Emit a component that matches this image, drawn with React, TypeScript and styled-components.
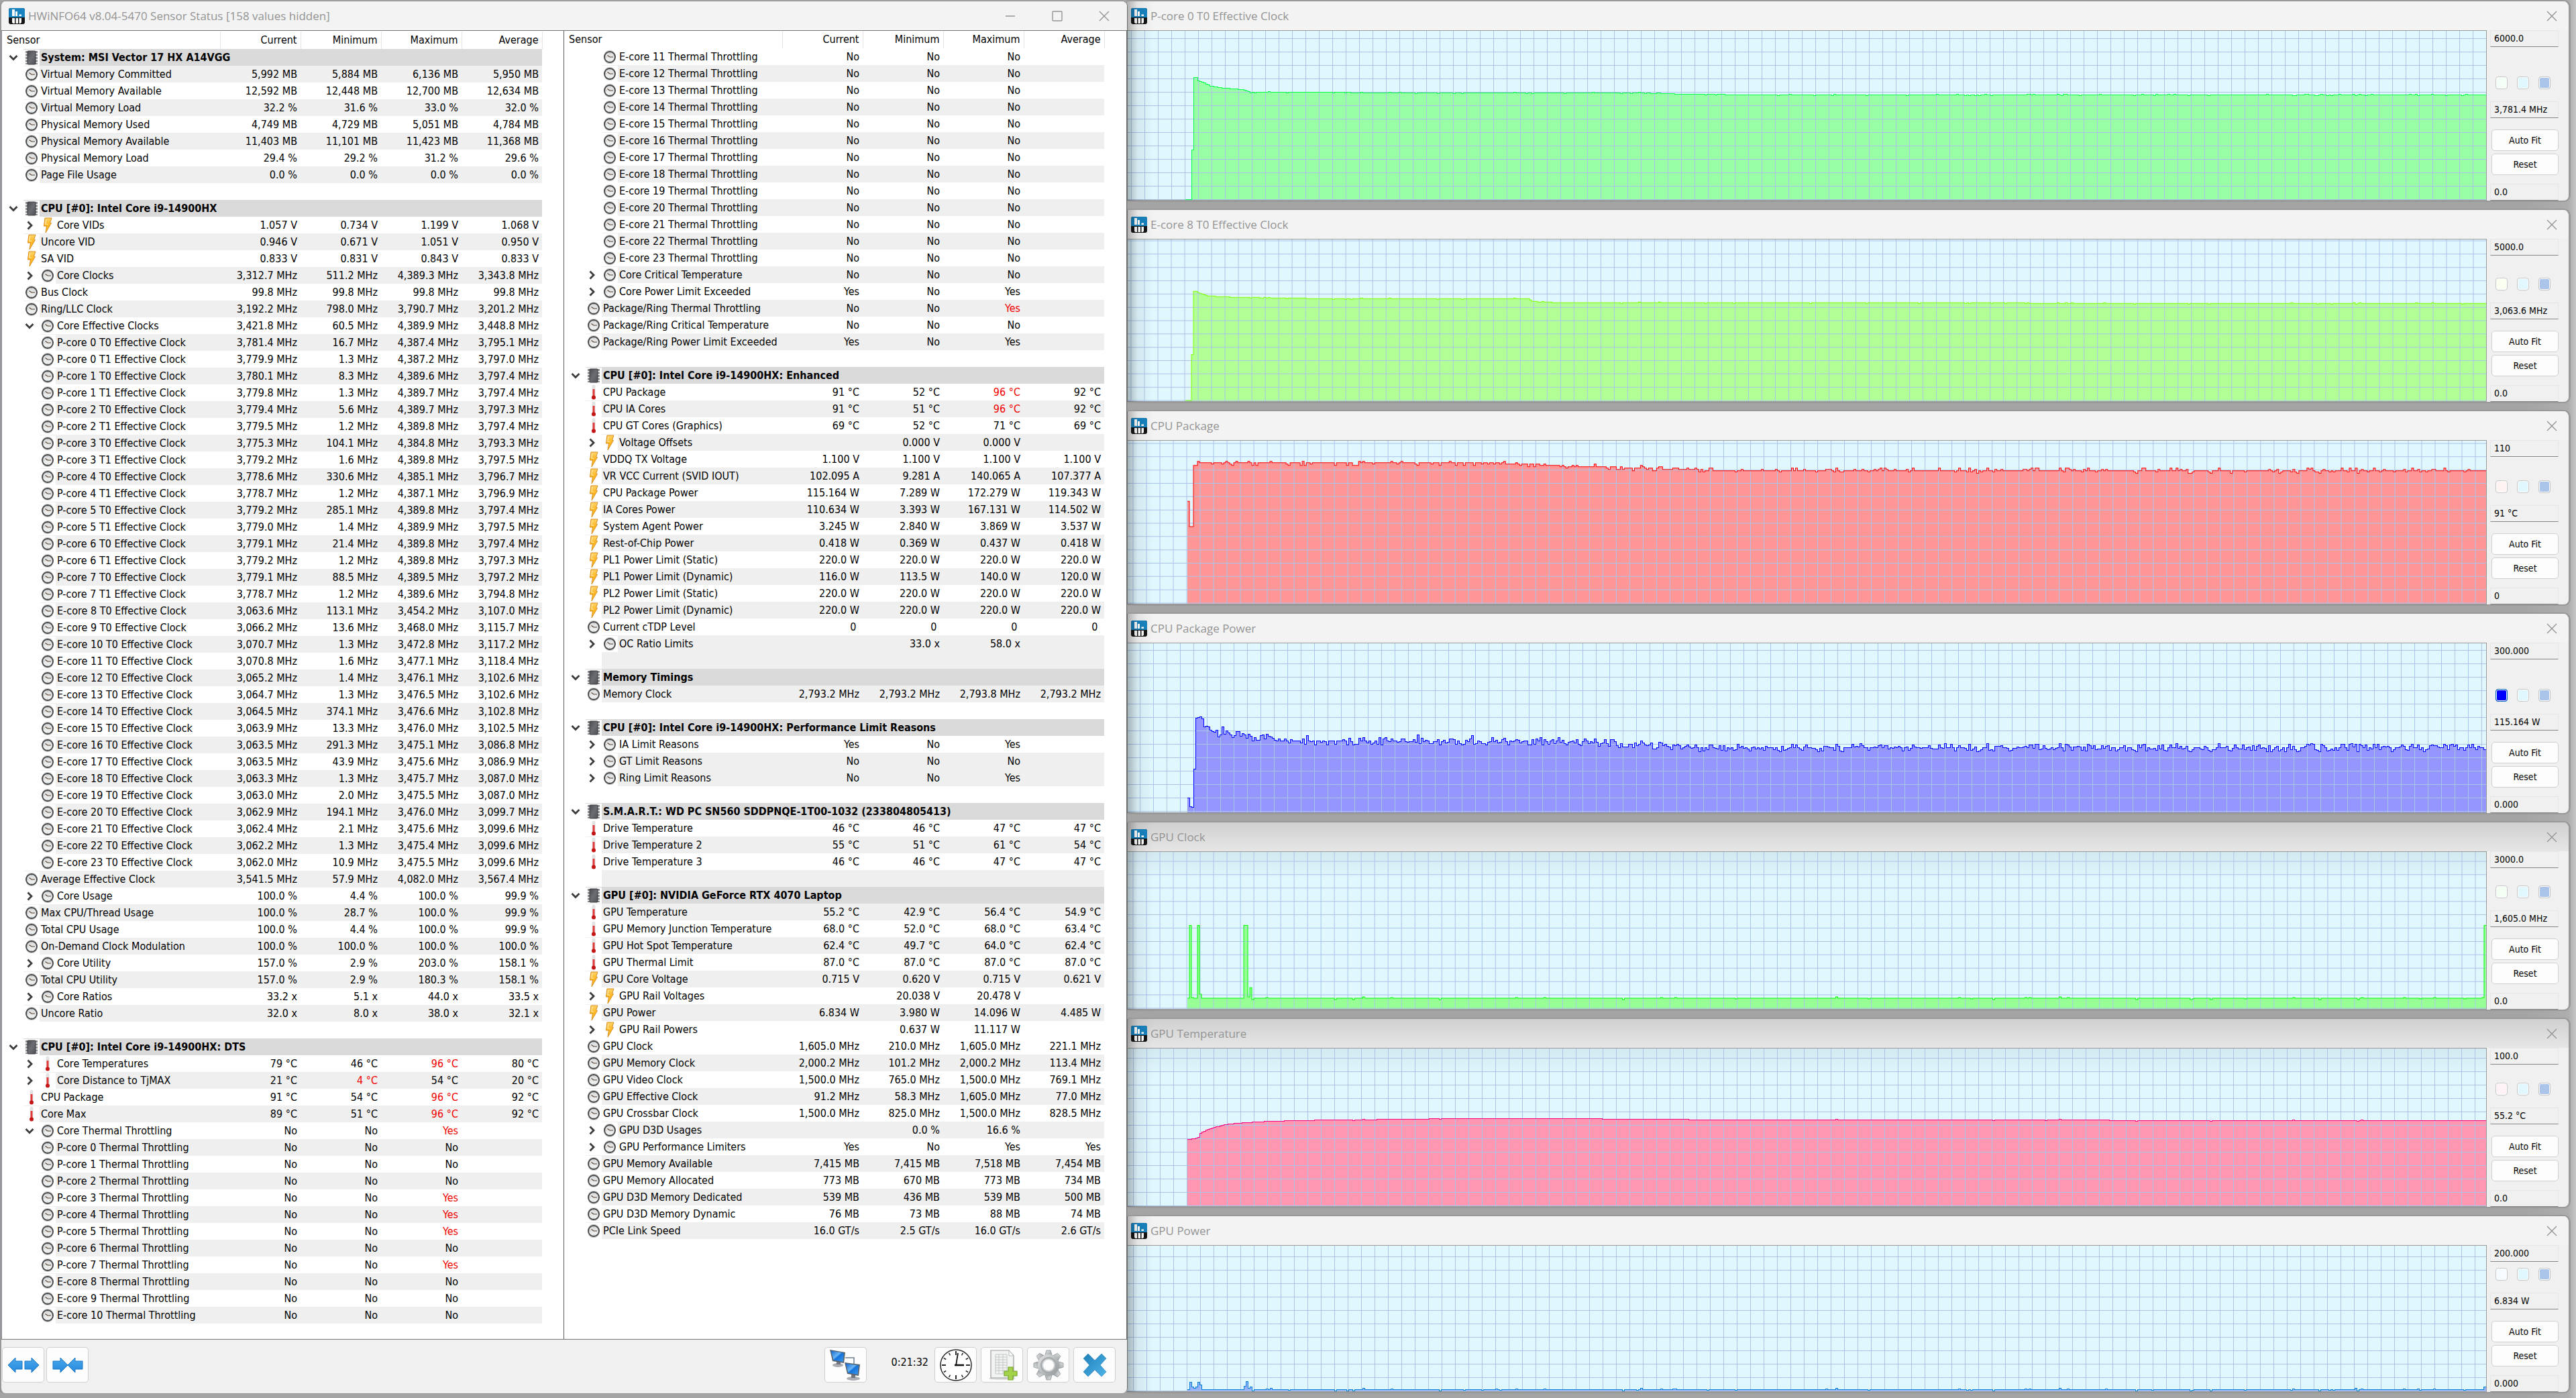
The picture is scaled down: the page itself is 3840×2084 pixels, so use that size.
import React from "react";
import styled, { createGlobalStyle, css } from "styled-components";

const UI_FONT = `"DejaVu Sans Condensed", "DejaVu Sans", Tahoma, sans-serif`;
const TITLE_FONT = `"Open Sans", "Noto Sans", sans-serif`;

const GlobalStyle = createGlobalStyle`
  * { box-sizing: border-box; }
  body { margin: 0; background: #adadad; font-family: ${UI_FONT}; font-size: 16px; color: #000; }
  button, input { font: inherit; color: inherit; }
`;

/* ---------- sensor data ----------
   kind + state; name; current; minimum; maximum; average
   kind:  h header, c clock, v voltage/power, t temperature
   state: - leaf, > collapsed group, v expanded group, + child of a group
   a leading ! marks an alert value */

const LEFT_ROWS = `h-;System: MSI Vector 17 HX A14VGG
c-;Virtual Memory Committed;5,992 MB;5,884 MB;6,136 MB;5,950 MB
c-;Virtual Memory Available;12,592 MB;12,448 MB;12,700 MB;12,634 MB
c-;Virtual Memory Load;32.2 %;31.6 %;33.0 %;32.0 %
c-;Physical Memory Used;4,749 MB;4,729 MB;5,051 MB;4,784 MB
c-;Physical Memory Available;11,403 MB;11,101 MB;11,423 MB;11,368 MB
c-;Physical Memory Load;29.4 %;29.2 %;31.2 %;29.6 %
c-;Page File Usage;0.0 %;0.0 %;0.0 %;0.0 %

h-;CPU [#0]: Intel Core i9-14900HX
v>;Core VIDs;1.057 V;0.734 V;1.199 V;1.068 V
v-;Uncore VID;0.946 V;0.671 V;1.051 V;0.950 V
v-;SA VID;0.833 V;0.831 V;0.843 V;0.833 V
c>;Core Clocks;3,312.7 MHz;511.2 MHz;4,389.3 MHz;3,343.8 MHz
c-;Bus Clock;99.8 MHz;99.8 MHz;99.8 MHz;99.8 MHz
c-;Ring/LLC Clock;3,192.2 MHz;798.0 MHz;3,790.7 MHz;3,201.2 MHz
cv;Core Effective Clocks;3,421.8 MHz;60.5 MHz;4,389.9 MHz;3,448.8 MHz
c+;P-core 0 T0 Effective Clock;3,781.4 MHz;16.7 MHz;4,387.4 MHz;3,795.1 MHz
c+;P-core 0 T1 Effective Clock;3,779.9 MHz;1.3 MHz;4,387.2 MHz;3,797.0 MHz
c+;P-core 1 T0 Effective Clock;3,780.1 MHz;8.3 MHz;4,389.6 MHz;3,797.4 MHz
c+;P-core 1 T1 Effective Clock;3,779.8 MHz;1.3 MHz;4,389.7 MHz;3,797.4 MHz
c+;P-core 2 T0 Effective Clock;3,779.4 MHz;5.6 MHz;4,389.7 MHz;3,797.3 MHz
c+;P-core 2 T1 Effective Clock;3,779.5 MHz;1.2 MHz;4,389.8 MHz;3,797.4 MHz
c+;P-core 3 T0 Effective Clock;3,775.3 MHz;104.1 MHz;4,384.8 MHz;3,793.3 MHz
c+;P-core 3 T1 Effective Clock;3,779.2 MHz;1.6 MHz;4,389.8 MHz;3,797.5 MHz
c+;P-core 4 T0 Effective Clock;3,778.6 MHz;330.6 MHz;4,385.1 MHz;3,796.7 MHz
c+;P-core 4 T1 Effective Clock;3,778.7 MHz;1.2 MHz;4,387.1 MHz;3,796.9 MHz
c+;P-core 5 T0 Effective Clock;3,779.2 MHz;285.1 MHz;4,389.8 MHz;3,797.4 MHz
c+;P-core 5 T1 Effective Clock;3,779.0 MHz;1.4 MHz;4,389.9 MHz;3,797.5 MHz
c+;P-core 6 T0 Effective Clock;3,779.1 MHz;21.4 MHz;4,389.8 MHz;3,797.4 MHz
c+;P-core 6 T1 Effective Clock;3,779.2 MHz;1.2 MHz;4,389.8 MHz;3,797.3 MHz
c+;P-core 7 T0 Effective Clock;3,779.1 MHz;88.5 MHz;4,389.5 MHz;3,797.2 MHz
c+;P-core 7 T1 Effective Clock;3,778.7 MHz;1.2 MHz;4,389.6 MHz;3,794.8 MHz
c+;E-core 8 T0 Effective Clock;3,063.6 MHz;113.1 MHz;3,454.2 MHz;3,107.0 MHz
c+;E-core 9 T0 Effective Clock;3,066.2 MHz;13.6 MHz;3,468.0 MHz;3,115.7 MHz
c+;E-core 10 T0 Effective Clock;3,070.7 MHz;1.3 MHz;3,472.8 MHz;3,117.2 MHz
c+;E-core 11 T0 Effective Clock;3,070.8 MHz;1.6 MHz;3,477.1 MHz;3,118.4 MHz
c+;E-core 12 T0 Effective Clock;3,065.2 MHz;1.4 MHz;3,476.1 MHz;3,102.6 MHz
c+;E-core 13 T0 Effective Clock;3,064.7 MHz;1.3 MHz;3,476.5 MHz;3,102.6 MHz
c+;E-core 14 T0 Effective Clock;3,064.5 MHz;374.1 MHz;3,476.6 MHz;3,102.8 MHz
c+;E-core 15 T0 Effective Clock;3,063.9 MHz;13.3 MHz;3,476.0 MHz;3,102.5 MHz
c+;E-core 16 T0 Effective Clock;3,063.5 MHz;291.3 MHz;3,475.1 MHz;3,086.8 MHz
c+;E-core 17 T0 Effective Clock;3,063.5 MHz;43.9 MHz;3,475.6 MHz;3,086.9 MHz
c+;E-core 18 T0 Effective Clock;3,063.3 MHz;1.3 MHz;3,475.7 MHz;3,087.0 MHz
c+;E-core 19 T0 Effective Clock;3,063.0 MHz;2.0 MHz;3,475.5 MHz;3,087.0 MHz
c+;E-core 20 T0 Effective Clock;3,062.9 MHz;194.1 MHz;3,476.0 MHz;3,099.7 MHz
c+;E-core 21 T0 Effective Clock;3,062.4 MHz;2.1 MHz;3,475.6 MHz;3,099.6 MHz
c+;E-core 22 T0 Effective Clock;3,062.2 MHz;1.3 MHz;3,475.4 MHz;3,099.6 MHz
c+;E-core 23 T0 Effective Clock;3,062.0 MHz;10.9 MHz;3,475.5 MHz;3,099.6 MHz
c-;Average Effective Clock;3,541.5 MHz;57.9 MHz;4,082.0 MHz;3,567.4 MHz
c>;Core Usage;100.0 %;4.4 %;100.0 %;99.9 %
c-;Max CPU/Thread Usage;100.0 %;28.7 %;100.0 %;99.9 %
c-;Total CPU Usage;100.0 %;4.4 %;100.0 %;99.9 %
c-;On-Demand Clock Modulation;100.0 %;100.0 %;100.0 %;100.0 %
c>;Core Utility;157.0 %;2.9 %;203.0 %;158.1 %
c-;Total CPU Utility;157.0 %;2.9 %;180.3 %;158.1 %
c>;Core Ratios;33.2 x;5.1 x;44.0 x;33.5 x
c-;Uncore Ratio;32.0 x;8.0 x;38.0 x;32.1 x

h-;CPU [#0]: Intel Core i9-14900HX: DTS
t>;Core Temperatures;79 °C;46 °C;!96 °C;80 °C
t>;Core Distance to TjMAX;21 °C;!4 °C;54 °C;20 °C
t-;CPU Package;91 °C;54 °C;!96 °C;92 °C
t-;Core Max;89 °C;51 °C;!96 °C;92 °C
cv;Core Thermal Throttling;No;No;!Yes;
c+;P-core 0 Thermal Throttling;No;No;No;
c+;P-core 1 Thermal Throttling;No;No;No;
c+;P-core 2 Thermal Throttling;No;No;No;
c+;P-core 3 Thermal Throttling;No;No;!Yes;
c+;P-core 4 Thermal Throttling;No;No;!Yes;
c+;P-core 5 Thermal Throttling;No;No;!Yes;
c+;P-core 6 Thermal Throttling;No;No;No;
c+;P-core 7 Thermal Throttling;No;No;!Yes;
c+;E-core 8 Thermal Throttling;No;No;No;
c+;E-core 9 Thermal Throttling;No;No;No;
c+;E-core 10 Thermal Throttling;No;No;No;`;

const RIGHT_ROWS = `c+;E-core 11 Thermal Throttling;No;No;No;
c+;E-core 12 Thermal Throttling;No;No;No;
c+;E-core 13 Thermal Throttling;No;No;No;
c+;E-core 14 Thermal Throttling;No;No;No;
c+;E-core 15 Thermal Throttling;No;No;No;
c+;E-core 16 Thermal Throttling;No;No;No;
c+;E-core 17 Thermal Throttling;No;No;No;
c+;E-core 18 Thermal Throttling;No;No;No;
c+;E-core 19 Thermal Throttling;No;No;No;
c+;E-core 20 Thermal Throttling;No;No;No;
c+;E-core 21 Thermal Throttling;No;No;No;
c+;E-core 22 Thermal Throttling;No;No;No;
c+;E-core 23 Thermal Throttling;No;No;No;
c>;Core Critical Temperature;No;No;No;
c>;Core Power Limit Exceeded;Yes;No;Yes;
c-;Package/Ring Thermal Throttling;No;No;!Yes;
c-;Package/Ring Critical Temperature;No;No;No;
c-;Package/Ring Power Limit Exceeded;Yes;No;Yes;

h-;CPU [#0]: Intel Core i9-14900HX: Enhanced
t-;CPU Package;91 °C;52 °C;!96 °C;92 °C
t-;CPU IA Cores;91 °C;51 °C;!96 °C;92 °C
t-;CPU GT Cores (Graphics);69 °C;52 °C;71 °C;69 °C
v>;Voltage Offsets;;0.000 V;0.000 V;
v-;VDDQ TX Voltage;1.100 V;1.100 V;1.100 V;1.100 V
v-;VR VCC Current (SVID IOUT);102.095 A;9.281 A;140.065 A;107.377 A
v-;CPU Package Power;115.164 W;7.289 W;172.279 W;119.343 W
v-;IA Cores Power;110.634 W;3.393 W;167.131 W;114.502 W
v-;System Agent Power;3.245 W;2.840 W;3.869 W;3.537 W
v-;Rest-of-Chip Power;0.418 W;0.369 W;0.437 W;0.418 W
v-;PL1 Power Limit (Static);220.0 W;220.0 W;220.0 W;220.0 W
v-;PL1 Power Limit (Dynamic);116.0 W;113.5 W;140.0 W;120.0 W
v-;PL2 Power Limit (Static);220.0 W;220.0 W;220.0 W;220.0 W
v-;PL2 Power Limit (Dynamic);220.0 W;220.0 W;220.0 W;220.0 W
c-;Current cTDP Level;0\u00a0;0\u00a0;0\u00a0;0\u00a0
c>;OC Ratio Limits;;33.0 x;58.0 x;

h-;Memory Timings
c-;Memory Clock;2,793.2 MHz;2,793.2 MHz;2,793.8 MHz;2,793.2 MHz

h-;CPU [#0]: Intel Core i9-14900HX: Performance Limit Reasons
c>;IA Limit Reasons;Yes;No;Yes;
c>;GT Limit Reasons;No;No;No;
c>;Ring Limit Reasons;No;No;Yes;

h-;S.M.A.R.T.: WD PC SN560 SDDPNQE-1T00-1032 (233804805413)
t-;Drive Temperature;46 °C;46 °C;47 °C;47 °C
t-;Drive Temperature 2;55 °C;51 °C;61 °C;54 °C
t-;Drive Temperature 3;46 °C;46 °C;47 °C;47 °C

h-;GPU [#0]: NVIDIA GeForce RTX 4070 Laptop
t-;GPU Temperature;55.2 °C;42.9 °C;56.4 °C;54.9 °C
t-;GPU Memory Junction Temperature;68.0 °C;52.0 °C;68.0 °C;63.4 °C
t-;GPU Hot Spot Temperature;62.4 °C;49.7 °C;64.0 °C;62.4 °C
t-;GPU Thermal Limit;87.0 °C;87.0 °C;87.0 °C;87.0 °C
v-;GPU Core Voltage;0.715 V;0.620 V;0.715 V;0.621 V
v>;GPU Rail Voltages;;20.038 V;20.478 V;
v-;GPU Power;6.834 W;3.980 W;14.096 W;4.485 W
v>;GPU Rail Powers;;0.637 W;11.117 W;
c-;GPU Clock;1,605.0 MHz;210.0 MHz;1,605.0 MHz;221.1 MHz
c-;GPU Memory Clock;2,000.2 MHz;101.2 MHz;2,000.2 MHz;113.4 MHz
c-;GPU Video Clock;1,500.0 MHz;765.0 MHz;1,500.0 MHz;769.1 MHz
c-;GPU Effective Clock;91.2 MHz;58.3 MHz;1,605.0 MHz;77.0 MHz
c-;GPU Crossbar Clock;1,500.0 MHz;825.0 MHz;1,500.0 MHz;828.5 MHz
c>;GPU D3D Usages;;0.0 %;16.6 %;
c>;GPU Performance Limiters;Yes;No;Yes;Yes
c-;GPU Memory Available;7,415 MB;7,415 MB;7,518 MB;7,454 MB
c-;GPU Memory Allocated;773 MB;670 MB;773 MB;734 MB
c-;GPU D3D Memory Dedicated;539 MB;436 MB;539 MB;500 MB
c-;GPU D3D Memory Dynamic;76 MB;73 MB;88 MB;74 MB
c-;PCIe Link Speed;16.0 GT/s;2.5 GT/s;16.0 GT/s;2.6 GT/s`;

// Hidden rows shift the zebra striping further down the second list.
const leftStripe = (i: number) => i % 2 === 1;
const rightStripe = (i: number) => {
  if (i === 36 || i === 38 || i === 42) return true;
  if (i >= 39 && i <= 41) return false;
  if (i >= 60) return i % 2 === 0;
  if (i === 45 || i === 59) return false;
  return i % 2 === 1;
};

/* ---------- small drawings ---------- */

const Defs = () => (
  <HiddenSvg aria-hidden="true">
    <defs>
      <linearGradient id="boltFill" x1="0" y1="0" x2="0" y2="1">
        <stop offset="0" stopColor="#ffd56a" />
        <stop offset="0.5" stopColor="#ffb51e" />
        <stop offset="1" stopColor="#ffc93c" />
      </linearGradient>
      <linearGradient id="chipFill" x1="0" y1="0" x2="1" y2="1">
        <stop offset="0" stopColor="#4a4c50" />
        <stop offset="0.5" stopColor="#6b6d72" />
        <stop offset="1" stopColor="#505257" />
      </linearGradient>
      <linearGradient id="faceFill" x1="0" y1="0" x2="0" y2="1">
        <stop offset="0" stopColor="#d9dadb" />
        <stop offset="1" stopColor="#f4f5f5" />
      </linearGradient>
      <linearGradient id="arrowFill" x1="0" y1="0" x2="0" y2="1">
        <stop offset="0" stopColor="#4ba8ec" />
        <stop offset="1" stopColor="#2488dc" />
      </linearGradient>
      <linearGradient id="screenFill" x1="0" y1="0" x2="1" y2="1">
        <stop offset="0" stopColor="#0d62c9" />
        <stop offset="0.45" stopColor="#6bb6f7" />
        <stop offset="0.55" stopColor="#1272da" />
        <stop offset="1" stopColor="#3f9cf0" />
      </linearGradient>
      <linearGradient id="gearFill" x1="0" y1="0" x2="1" y2="1">
        <stop offset="0" stopColor="#e6e9ea" />
        <stop offset="0.5" stopColor="#b9bdbf" />
        <stop offset="1" stopColor="#8f9496" />
      </linearGradient>
      <linearGradient id="crossFill" x1="0" y1="0" x2="1" y2="1">
        <stop offset="0" stopColor="#1f7fb8" />
        <stop offset="1" stopColor="#4fb4ea" />
      </linearGradient>
    </defs>
  </HiddenSvg>
);

const ClockIcon = () => (
  <svg width="24" height="24" viewBox="0 0 24 24" aria-hidden="true">
    <rect x="4" y="2" width="16" height="20" rx="7" fill="#cfcfcf" />
    <circle cx="12" cy="12" r="8" fill="url(#faceFill)" stroke="#48494b" strokeWidth="2" />
    <path d="M8.5 9.5L12 12h5" fill="none" stroke="#55402e" strokeWidth="1.2" />
    <path d="M12 5.5v1M12 17.5v1M5.8 12h1" stroke="#8a8a8a" strokeWidth="1" />
  </svg>
);

const ChipIcon = () => (
  <svg width="24" height="24" viewBox="0 0 24 24" aria-hidden="true">
    <path d="M4.5 2v20M19.5 2v20" stroke="#8b8d90" strokeWidth="3" strokeDasharray="3 1.5" />
    <rect x="6" y="2" width="12" height="20" rx="1" fill="url(#chipFill)" stroke="#3b3c3f" />
  </svg>
);

const BoltIcon = () => (
  <svg width="24" height="24" viewBox="0 0 24 24" aria-hidden="true">
    <path d="M8 1h10l-2.500 7 2 .5L9 23l1.500-10L6.500 13z" fill="url(#boltFill)" stroke="#d98c1c" strokeWidth="1" />
    <path d="M10 3L8.500 10l4 .5" fill="none" stroke="#ffe9a8" strokeWidth="1.200" />
  </svg>
);

const ThermoIcon = () => (
  <svg width="24" height="24" viewBox="0 0 24 24" aria-hidden="true">
    <rect x="10" y="1" width="4" height="19" rx="2" fill="#e4e4e4" stroke="#cfcfcf" strokeWidth="0.500" />
    <rect x="10.500" y="7" width="3" height="13" fill="#e03a3a" />
    <circle cx="12" cy="19.500" r="3" fill="#c41414" />
  </svg>
);

const ICONS: Record<string, React.FC> = { h: ChipIcon, c: ClockIcon, v: BoltIcon, t: ThermoIcon };

const Chevron = ({ open }: { open: boolean }) => (
  <svg width="14" height="14" viewBox="0 0 14 14" aria-hidden="true">
    <path
      d={open ? "M1.500 4L7 9.500 12.500 4" : "M4.500 1.500L10 7l-5.500 5.500"}
      fill="none"
      stroke="#3c3c3c"
      strokeWidth="2.800"
    />
  </svg>
);

const Logo = () => (
  <svg width="24" height="24" viewBox="0 0 24 24" aria-hidden="true">
    <rect width="24" height="24" rx="3" fill="#151515" />
    <path d="M3 0h18a3 3 0 0 1 3 3v11H0V3a3 3 0 0 1 3-3z" fill="#1883bf" />
    <path d="M5 2h4v10H5zM10 5h3v7h-3zM15.500 9.500h3.500V12h-3.500z" fill="#fff" />
    <path d="M5 15h4v8H6.500L5 21.500zM10.500 15h3.500v8h-3.500zM15.500 15H19v6.500L17.500 23h-2z" fill="#fff" />
  </svg>
);

const CloseGlyph = () => (
  <svg width="16" height="16" viewBox="0 0 16 16" aria-hidden="true">
    <path d="M1 1l14 14M15 1L1 15" stroke="#949494" strokeWidth="1.400" />
  </svg>
);

const MinGlyph = () => (
  <svg width="16" height="16" viewBox="0 0 16 16" aria-hidden="true">
    <path d="M1 8h14" stroke="#949494" strokeWidth="1.400" />
  </svg>
);

const MaxGlyph = () => (
  <svg width="16" height="16" viewBox="0 0 16 16" aria-hidden="true">
    <rect x="1" y="1" width="14" height="14" rx="1" fill="none" stroke="#949494" strokeWidth="1.400" />
  </svg>
);

const ExpandArrows = () => (
  <svg width="48" height="28" viewBox="0 0 48 28" aria-hidden="true">
    <g fill="url(#arrowFill)" stroke="#1f78c4" strokeWidth="1">
      <path d="M1 14L12 3v5h10v12H12v5z" />
      <path d="M47 14L36 3v5H26v12h10v5z" />
    </g>
  </svg>
);

const CollapseArrows = () => (
  <svg width="48" height="28" viewBox="0 0 48 28" aria-hidden="true">
    <g fill="url(#arrowFill)" stroke="#1f78c4" strokeWidth="1">
      <path d="M24 14L13 3v5H2v12h11v5z" />
      <path d="M24 14L35 3v5h11v12H35v5z" />
    </g>
  </svg>
);

const NetworkIcon = () => (
  <svg width="48" height="48" viewBox="0 0 48 48" aria-hidden="true">
    <path d="M24 13h13v10" fill="none" stroke="#6d7d8c" strokeWidth="1.500" />
    <ellipse cx="13" cy="24" rx="8" ry="3" fill="#a9adb2" />
    <path d="M11 18h6v5h-6z" fill="#72767b" />
    <path d="M1 1l23 4-2 16-17-3z" fill="#59636d" />
    <path d="M2.500 2.500L22 6l-1.500 13L6.500 16.500z" fill="url(#screenFill)" />
    <ellipse cx="36" cy="44" rx="10" ry="3" fill="#a9adb2" />
    <path d="M33 37h6v6h-6z" fill="#72767b" />
    <path d="M23 20l23 3-2 17-17-3z" fill="#59636d" />
    <path d="M24.500 21.500l19.500 3-1.500 13.500-14-2.500z" fill="url(#screenFill)" />
  </svg>
);

const WallClockIcon = () => (
  <svg width="48" height="48" viewBox="0 0 48 48" aria-hidden="true">
    <circle cx="24" cy="24" r="23" fill="#fff" stroke="#2b2b2b" strokeWidth="1.500" />
    {Array.from({ length: 12 }, (_, i) => (
      <path
        key={i}
        d={i % 3 === 0 ? "M24 3v6" : "M24 3v4"}
        stroke="#2b2b2b"
        strokeWidth={i % 3 === 0 ? 2 : 1.5}
        transform={`rotate(${i * 30} 24 24)`}
      />
    ))}
    <path d="M24 25L27 6" stroke="#111" strokeWidth="1.800" />
    <path d="M22 24h14" stroke="#111" strokeWidth="2.600" />
  </svg>
);

const ReportIcon = () => (
  <svg width="48" height="48" viewBox="0 0 48 48" aria-hidden="true">
    <ellipse cx="24" cy="44" rx="20" ry="2" fill="#dcdcdc" />
    <path d="M7 2h27l7 8v33H7z" fill="#f2f3f3" stroke="#9a9c9c" strokeWidth="1.200" />
    <path d="M34 2v8h7z" fill="#fff" stroke="#b5b7b7" />
    <path
      d="M14 8h17v29H14zM14 12h17M14 16h17M14 20h17M14 24h17M14 28h17M14 32h17M19 8v29M25 8v29"
      fill="none"
      stroke="#c4c7c7"
    />
    <path d="M33 27h7v6h6v7h-6v6h-7v-6h-6v-7h6z" fill="#a3d149" stroke="#75a52a" strokeWidth="1.200" />
  </svg>
);

const GearIcon = () => (
  <svg width="48" height="48" viewBox="0 0 48 48" aria-hidden="true">
    <g fill="url(#gearFill)" stroke="#8d9193" strokeWidth="0.800">
      {Array.from({ length: 8 }, (_, i) => (
        <path key={i} d="M18 12l3-10h6l3 10z" transform={`rotate(${i * 45} 24 24)`} />
      ))}
    </g>
    <circle cx="24" cy="24" r="16" fill="url(#gearFill)" />
    <circle cx="24" cy="24" r="12" fill="#a3a8aa" />
    <circle cx="24" cy="24" r="9" fill="#fdfdfd" stroke="#cdd0d1" strokeWidth="2" />
  </svg>
);

const CrossIcon = () => (
  <svg width="36" height="36" viewBox="0 0 36 36" aria-hidden="true">
    <path
      d="M8 1l10 10L28 1l7 7-9 10 9 10-7 7-10-10L8 35l-7-7 9-10L1 8z"
      fill="url(#crossFill)"
      stroke="#3a93c8"
      strokeWidth="0.800"
    />
  </svg>
);

/* ---------- layout ---------- */

const HiddenSvg = styled.svg`
  position: absolute;
  width: 0;
  height: 0;
`;

const Desktop = styled.main`
  display: grid;
  grid-template-columns: 7fr 9fr;
  grid-template-rows: minmax(0, 1fr);
  height: 100vh;
  min-height: 2000px;
  padding: 2px 0 7px;
  background: linear-gradient(90deg, #a4a4a4 0 98%, #adadad 99.700%, #c6c6c6);
`;

const MainWindow = styled.section`
  display: flex;
  flex-direction: column;
  min-width: 0;
  overflow: hidden;
  border-left: 2px solid #98989b;
  border-radius: 8px;
  background: #f0f0f0;
  box-shadow: 0 0 0 1px #939393;
  z-index: 1;
`;

const TitleBar = styled.header<{ $dim?: boolean }>`
  display: flex;
  flex: none;
  align-items: center;
  gap: 5px;
  height: 43px;
  background: ${(p) => (p.$dim ? "linear-gradient(#d0d0d0, #e6e6e6)" : "#f3f3f3")};
`;

const MainTitleBar = styled(TitleBar)`
  padding: 0 24px 0 11px;
`;

const GraphTitleBar = styled(TitleBar)`
  padding: 0 15px 0 6px;
`;

const Title = styled.h1`
  flex: 1;
  margin: 0;
  color: #949494;
  font-family: ${TITLE_FONT};
  font-size: 17px;
  font-weight: 400;
  line-height: 24px;
  white-space: nowrap;
`;

const WindowButton = styled.button`
  display: grid;
  place-items: center;
  width: 20px;
  height: 24px;
  padding: 0;
  border: 0;
  background: none;
`;

const WindowButtons = styled.div`
  display: flex;
  gap: 50px;
`;

const Lists = styled.div`
  display: grid;
  flex: 1;
  grid-template-columns: 838fr 840fr;
  min-height: 0;
  border-top: 1px solid #777;
  border-bottom: 1px solid #777;
`;

const ListPane = styled.div<{ $lead?: boolean }>`
  overflow: hidden;
  min-width: 0;
  padding-top: ${(p) => (p.$lead ? 1 : 0)}px;
  border-left: 1px solid ${(p) => (p.$lead ? "#8b8f98" : "#5f5f62")};
  border-right: ${(p) => (p.$lead ? "0" : "1px solid #6f6f72")};
  background: #fff;
`;

const SensorTable = styled.table`
  width: 805px;
  border-collapse: collapse;
  table-layout: fixed;
  font-size: 16px;
  line-height: 24px;
  white-space: nowrap;
`;

const HeadCell = styled.th<{ $first?: boolean }>`
  width: ${(p) => (p.$first ? 325 : 120)}px;
  height: 26px;
  padding: 0 5px 0 7px;
  border-right: 1px solid #e5e5e5;
  font-weight: 400;
  text-align: ${(p) => (p.$first ? "left" : "right")};
`;

const tone = css<{ $tone: Tone }>`
  background: ${(p) => (p.$tone === "head" ? "#dadada" : p.$tone === "stripe" ? "#efefef" : "#fff")};
`;

type Tone = "head" | "stripe" | "plain";

const Row = styled.tr`
  height: 25px;
`;

const NameCell = styled.th`
  height: 25px;
  padding: 0;
  font-weight: 400;
  text-align: left;
`;

const NameLine = styled.div`
  display: flex;
  height: 25px;
`;

const Gutter = styled.span<{ $deep?: boolean }>`
  display: flex;
  flex: none;
  align-items: center;
  justify-content: flex-end;
  width: ${(p) => (p.$deep ? 56 : 32)}px;
  padding-right: 8px;
`;

const Toggle = styled.button`
  display: grid;
  place-items: center;
  width: 14px;
  height: 14px;
  padding: 0;
  border: 0;
  background: none;
`;

const Band = styled.span<{ $tone: Tone }>`
  display: flex;
  flex: 1;
  align-items: flex-end;
  gap: 2px;
  ${tone}
`;

const IconTile = styled.span`
  flex: none;
  width: 24px;
  height: 24px;
  background: #fff;
  svg { display: block; }
`;

const Label = styled.span<{ $bold?: boolean }>`
  overflow: visible;
  font-weight: ${(p) => (p.$bold ? 700 : 400)};
`;

const ValueCell = styled.td<{ $tone: Tone; $alert?: boolean }>`
  height: 25px;
  padding: 1px 5px 0 0;
  color: ${(p) => (p.$alert ? "#f00000" : "#000")};
  text-align: right;
  ${tone}
`;

const Toolbar = styled.footer`
  display: flex;
  flex: none;
  align-items: flex-start;
  justify-content: space-between;
  height: 80px;
  padding: 11px 17px 0 1px;
`;

const ToolGroup = styled.div<{ $gap: number }>`
  display: flex;
  align-items: center;
  gap: ${(p) => p.$gap}px;
`;

const ToolButton = styled.button`
  display: grid;
  place-items: center;
  width: 63px;
  height: 53px;
  padding: 0;
  border: 1px solid #cfcfcf;
  border-radius: 5px;
  background: #fdfdfd;
`;

const Elapsed = styled.time`
  padding: 0 3px 8px 31px;
  line-height: 24px;
`;

const Graphs = styled.div`
  display: grid;
  grid-template-rows: 299fr 288fr 290fr 299fr 281fr 282fr 264fr;
  row-gap: 12px;
  min-width: 0;
  min-height: 0;
  padding-right: 9px;
`;

const GraphWindow = styled.section`
  display: flex;
  flex-direction: column;
  min-width: 0;
  min-height: 0;
  overflow: hidden;
  border: 2px solid #999;
  border-width: 0 2px 2px 0;
  border-radius: 0 9px 9px 0;
  background: #f0f0f0;
  box-shadow: 0 -1px 0 1px #999;
  position: relative;
  &::before {
    content: "";
    position: absolute;
    inset: 0 auto 0 0;
    width: 40px;
    background: linear-gradient(90deg, rgba(0, 0, 0, 0.28), rgba(0, 0, 0, 0.06) 16px, transparent);
    pointer-events: none;
    z-index: 1;
  }
`;

const GraphBody = styled.div`
  display: flex;
  flex: 1;
  min-height: 0;
`;

const Plot = styled.div<{ $dim?: boolean }>`
  flex: 1;
  min-width: 0;
  min-height: 0;
  border: 1px solid #9a9a9a;
  border-left: 0;
  background: ${(p) => (p.$dim ? "linear-gradient(#d3e9f0, #e0f7fe 40px)" : "#e0f7fe")};
  svg { display: block; width: 100%; height: 100%; }
`;

const Side = styled.aside`
  display: flex;
  flex: none;
  flex-direction: column;
  width: 122px;
  padding: 0 15px 0 5px;
  font-size: 14px;
`;

const Reading = styled.input`
  width: 102px;
  height: 25px;
  padding: 0 5px 2px;
  border: 1px solid #e6e6e6;
  border-bottom-color: #868686;
  background: #f0f0f0;
`;

const Swatches = styled.div`
  display: flex;
  gap: 14px;
  margin-top: auto;
  padding: 0 0 18px 8px;
`;

const Swatch = styled.button<{ $color: string; $focus?: boolean }>`
  width: 18px;
  height: 19px;
  padding: 0;
  border: 1px solid ${(p) => (p.$focus ? "#0067c0" : "#c8c8c8")};
  border-radius: 4px;
  background: ${(p) => p.$color};
  box-shadow: inset 0 0 0 1px #fff;
`;

const SideButtons = styled.div`
  display: flex;
  flex-direction: column;
  gap: 4px;
  padding: 17px 0 13px 2px;
`;

const SideButton = styled.button`
  width: 100px;
  height: 32px;
  padding: 0;
  border: 1px solid #cfcfcf;
  border-radius: 5px;
  background: #fdfdfd;
`;

/* ---------- graphs ---------- */

const PLOT_WIDTH = 2025;
const STEP = 3;

interface GraphSpec {
  title: string;
  height: number;
  max: string;
  min: string;
  value: string;
  line: string;
  fill: string;
  swatch: string;
  focus?: boolean;
  dim?: boolean;
  /** distance of the last vertical grid line from the right edge */
  phase: number;
  /** [x, height]; the level glides from one stop to the next */
  stops: [number, number][];
  /** [x, height] pairs held for one sample */
  spikes?: [number, number][];
  /** [from x, amplitude, chance, quantum] */
  jitter: [number, number, number, number];
}

const samples = (g: GraphSpec): [number, number][] => {
  let seed = 71;
  const rnd = () => {
    seed = (seed * 16807) % 2147483647;
    return seed / 2147483647;
  };
  const [from, amp, chance, quantum] = g.jitter;
  const spikes = new Map((g.spikes ?? []).map(([x, h]) => [Math.round(x / STEP), h]));
  const out: [number, number][] = [];
  const start = g.stops[0][0];
  for (let x = start; x < PLOT_WIDTH; x += STEP) {
    let k = 0;
    while (k < g.stops.length - 1 && g.stops[k + 1][0] <= x) k++;
    const [x0, h0] = g.stops[k];
    const [x1, h1] = g.stops[Math.min(k + 1, g.stops.length - 1)];
    let h = x1 > x0 ? h0 + ((h1 - h0) * (x - x0)) / (x1 - x0) : h0;
    const roll = rnd();
    const swing = rnd() - 0.5;
    if (x >= from && roll < chance) h += swing * 2 * amp;
    h = spikes.get(Math.round(x / STEP)) ?? Math.round(h / quantum) * quantum;
    out.push([x, h]);
  }
  return out;
};

const PlotDrawing = ({ g }: { g: GraphSpec }) => {
  const pts = samples(g);
  const base = g.height;
  let d = `M${pts[0][0]} ${base - pts[0][1]}`;
  pts.forEach(([x, h]) => {
    d += `H${x}V${Math.round(base - h)}`;
  });
  d += `H${PLOT_WIDTH}`;
  const area = `${d}V${base}H${pts[0][0]}Z`;
  let grid = "";
  for (let x = PLOT_WIDTH - g.phase; x > 0; x -= 20) grid += `M${x} 0V${base}`;
  for (let y = base - 1; y > 0; y -= 20) grid += `M0 ${y}H${PLOT_WIDTH}`;
  return (
    <svg
      viewBox={`0 0 ${PLOT_WIDTH} ${base}`}
      preserveAspectRatio="none"
      shapeRendering="crispEdges"
      role="img"
      aria-label={g.title}
    >
      <path d={area} fill={g.fill} />
      <path d={grid} stroke="#aac4ea" strokeWidth="1" fill="none" />
      <path d={d} stroke={g.line} strokeWidth="1" fill="none" />
    </svg>
  );
};

const GRAPHS: GraphSpec[] = [
  {
    title: "P-core 0 T0 Effective Clock",
    height: 252, max: "6000.0", min: "0.0", value: "3,781.4 MHz",
    line: "#00ff48", fill: "#98ffa4", swatch: "#f3fff6", phase: 19,
    stops: [[87, 1], [95, 1], [96, 75], [98, 75], [99, 183], [103, 183], [105, 178], [110, 177], [117, 173], [123, 170], [135, 168], [158, 166], [170, 165], [183, 161], [225, 161], [450, 160], [760, 160], [830, 158], [950, 157], [2025, 157]],
    jitter: [180, 1, 0.3, 1],
  },
  {
    title: "E-core 8 T0 Effective Clock",
    height: 243, max: "5000.0", min: "0.0", value: "3,063.6 MHz",
    line: "#80ff00", fill: "#b2ff96", swatch: "#fafff2", phase: 19,
    stops: [[87, 1], [95, 1], [96, 70], [98, 70], [99, 165], [103, 165], [105, 163], [120, 158], [160, 156], [300, 154], [597, 154], [602, 150], [640, 148], [2025, 147]],
    jitter: [180, 1, 0.15, 1],
  },
  {
    title: "CPU Package",
    height: 245, max: "110", min: "0", value: "91 °C",
    line: "#ff0000", fill: "#ff9696", swatch: "#fff4f2", phase: 16,
    stops: [[90, 153], [92, 153], [93, 115], [98, 115], [99, 207], [104, 207], [105, 211], [560, 211], [640, 208], [700, 206], [860, 201], [2025, 200]],
    jitter: [105, 4, 0.42, 2],
  },
  {
    title: "CPU Package Power",
    height: 251, max: "300.000", min: "0.000", value: "115.164 W",
    line: "#0000ff", fill: "#9696ff", swatch: "#0000ff", focus: true, phase: 6,
    stops: [[90, 21], [92, 21], [93, 8], [98, 6], [99, 64], [101, 64], [102, 140], [110, 142], [114, 126], [135, 117], [170, 113], [225, 106], [520, 105], [660, 106], [850, 96], [2025, 96]],
    spikes: [[140, 127], [165, 120], [208, 116], [268, 114], [433, 115], [514, 114]],
    jitter: [111, 6, 0.8, 1],
  },
  {
    title: "GPU Clock",
    height: 235, max: "3000.0", min: "0.0", value: "1,605.0 MHz",
    line: "#00ff00", fill: "#98ff96", swatch: "#f2fff2", dim: true, phase: 16,
    stops: [[90, 16], [2025, 16]],
    spikes: [[93, 125], [96, 17], [105, 125], [108, 22], [174, 125], [177, 125], [180, 18], [183, 32], [2022, 125], [2019, 17]],
    jitter: [120, 2, 0.1, 1],
  },
  {
    title: "GPU Temperature",
    height: 235, max: "100.0", min: "0.0", value: "55.2 °C",
    line: "#ff0080", fill: "#ff96b2", swatch: "#fff2f7", dim: true, phase: 16,
    stops: [[90, 100], [99, 101], [105, 103], [108, 109], [115, 113], [130, 118], [150, 123], [175, 125], [210, 127], [300, 129], [440, 130], [460, 131], [640, 131], [900, 129], [2025, 128]],
    jitter: [180, 1, 0.05, 1],
  },
  {
    title: "GPU Power",
    height: 217, max: "200.000", min: "0.000", value: "6.834 W",
    line: "#0080d8", fill: "#96b2ff", swatch: "#f5fbff", phase: 16,
    stops: [[90, 3], [2025, 3]],
    spikes: [[93, 14], [96, 7], [99, 5], [102, 7], [105, 14], [108, 10], [174, 8], [177, 15], [180, 5], [183, 7], [2022, 7]],
    jitter: [120, 2, 0.15, 1],
  },
];

const Graph = ({ g }: { g: GraphSpec }) => (
  <GraphWindow>
    <GraphTitleBar $dim={g.dim}>
      <Logo />
      <Title as="h2">{g.title}</Title>
      <WindowButton aria-label="Close"><CloseGlyph /></WindowButton>
    </GraphTitleBar>
    <GraphBody>
      <Plot $dim={g.dim}><PlotDrawing g={g} /></Plot>
      <Side>
        <Reading aria-label={`${g.title} scale maximum`} defaultValue={g.max} />
        <Swatches>
          <Swatch aria-label="Line colour" $color={g.swatch} $focus={g.focus} />
          <Swatch aria-label="Background colour" $color="#e0f7fe" />
          <Swatch aria-label="Grid colour" $color="#aac4ea" />
        </Swatches>
        <Reading aria-label={`${g.title} current value`} value={g.value} readOnly />
        <SideButtons>
          <SideButton>Auto Fit</SideButton>
          <SideButton>Reset</SideButton>
        </SideButtons>
        <Reading aria-label={`${g.title} scale minimum`} defaultValue={g.min} />
      </Side>
    </GraphBody>
  </GraphWindow>
);

/* ---------- sensor list ---------- */

const SensorRow = ({ line, stripe }: { line: string; stripe: boolean }) => {
  if (!line) {
    return (
      <Row>
        <NameCell as="td"><NameLine><Gutter $deep /><Band $tone={stripe ? "stripe" : "plain"} /></NameLine></NameCell>
        {[0, 1, 2, 3].map((i) => <ValueCell key={i} $tone={stripe ? "stripe" : "plain"} />)}
      </Row>
    );
  }
  const [code, name, ...values] = line.split(";");
  const [kind, state] = code;
  const head = kind === "h";
  const rowTone: Tone = head ? "head" : stripe ? "stripe" : "plain";
  const Icon = ICONS[kind];
  const group = state === ">" || state === "v";
  return (
    <Row>
      <NameCell scope="row">
        <NameLine>
          <Gutter $deep={state !== "-"}>
            {(head || group) && (
              <Toggle aria-label={name} aria-expanded={head || state === "v"}>
                <Chevron open={head || state === "v"} />
              </Toggle>
            )}
          </Gutter>
          <Band $tone={rowTone}>
            <IconTile><Icon /></IconTile>
            <Label $bold={head}>{name}</Label>
          </Band>
        </NameLine>
      </NameCell>
      {head ? (
        <ValueCell colSpan={4} $tone="head" />
      ) : (
        values.map((v, i) => (
          <ValueCell key={i} $tone={rowTone} $alert={v.startsWith("!")}>
            {v.replace("!", "")}
          </ValueCell>
        ))
      )}
    </Row>
  );
};

const SensorList = ({ data, stripe }: { data: string; stripe: (i: number) => boolean }) => (
  <SensorTable>
    <thead>
      <tr>
        <HeadCell scope="col" $first>Sensor</HeadCell>
        {["Current", "Minimum", "Maximum", "Average"].map((h) => (
          <HeadCell key={h} scope="col">{h}</HeadCell>
        ))}
      </tr>
    </thead>
    <tbody>
      {data.split("\n").map((line, i) => (
        <SensorRow key={i} line={line} stripe={stripe(i)} />
      ))}
    </tbody>
  </SensorTable>
);

export default function App() {
  return (
    <>
      <GlobalStyle />
      <Defs />
      <Desktop>
        <MainWindow>
          <MainTitleBar>
            <Logo />
            <Title>HWiNFO64 v8.04-5470 Sensor Status [158 values hidden]</Title>
            <WindowButtons>
              <WindowButton aria-label="Minimize"><MinGlyph /></WindowButton>
              <WindowButton aria-label="Maximize"><MaxGlyph /></WindowButton>
              <WindowButton aria-label="Close"><CloseGlyph /></WindowButton>
            </WindowButtons>
          </MainTitleBar>
          <Lists>
            <ListPane $lead><SensorList data={LEFT_ROWS} stripe={leftStripe} /></ListPane>
            <ListPane><SensorList data={RIGHT_ROWS} stripe={rightStripe} /></ListPane>
          </Lists>
          <Toolbar>
            <ToolGroup $gap={3}>
              <ToolButton aria-label="Expand columns"><ExpandArrows /></ToolButton>
              <ToolButton aria-label="Shrink columns"><CollapseArrows /></ToolButton>
            </ToolGroup>
            <ToolGroup $gap={6}>
              <ToolButton aria-label="Network"><NetworkIcon /></ToolButton>
              <Elapsed>0:21:32</Elapsed>
              <ToolButton aria-label="Reset timer"><WallClockIcon /></ToolButton>
              <ToolButton aria-label="Log to file"><ReportIcon /></ToolButton>
              <ToolButton aria-label="Settings"><GearIcon /></ToolButton>
              <ToolButton aria-label="Close sensors"><CrossIcon /></ToolButton>
            </ToolGroup>
          </Toolbar>
        </MainWindow>
        <Graphs>
          {GRAPHS.map((g) => <Graph key={g.title} g={g} />)}
        </Graphs>
      </Desktop>
    </>
  );
}
